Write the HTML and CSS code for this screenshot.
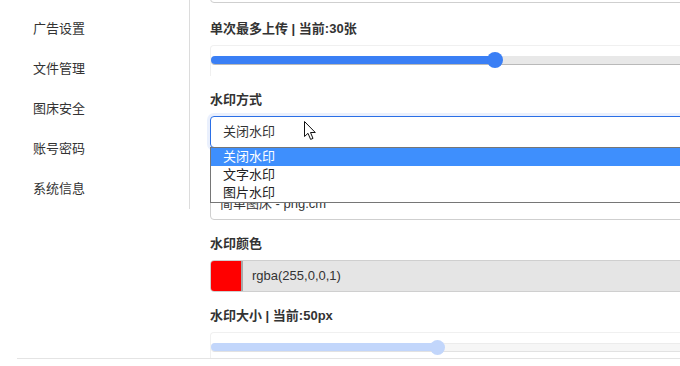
FILE: index.html
```html
<!DOCTYPE html>
<html lang="zh-CN">
<head>
<meta charset="utf-8">
<title>设置</title>
<link rel="stylesheet" href="styles.css">
</head>
<body>
<div class="layout">
  <aside class="sidebar">
    <div class="nav-item">广告设置</div>
    <div class="nav-item">文件管理</div>
    <div class="nav-item">图床安全</div>
    <div class="nav-item">账号密码</div>
    <div class="nav-item">系统信息</div>
  </aside>
  <main class="main">
    <div class="input partial"></div>

    <div class="group">
      <div class="label">单次最多上传 | 当前:30张</div>
      <div class="range">
        <div class="track">
          <div class="fill" style="width:284px"></div>
          <div class="thumb"></div>
        </div>
      </div>
    </div>

    <div class="group select-group">
      <div class="label">水印方式</div>
      <div class="select">关闭水印</div>
      <svg class="cursor" width="13" height="20" viewBox="0 0 13 20">
        <path d="M0.5 0.5 L0.5 15.5 L4 12.3 L6.6 18.4 L9 17.4 L6.5 11.5 L11.3 11.5 Z" fill="#fff" stroke="#111" stroke-width="1" stroke-linejoin="round"/>
      </svg>
      <div class="dropdown">
        <div class="option selected">关闭水印</div>
        <div class="option">文字水印</div>
        <div class="option">图片水印</div>
      </div>
    </div>

    <div class="group">
      <div class="label">水印文字</div>
      <div class="input">简单图床 - png.cm</div>
    </div>

    <div class="group">
      <div class="label">水印颜色</div>
      <div class="color">
        <div class="swatch"></div>
        <div class="color-text">rgba(255,0,0,1)</div>
      </div>
    </div>

    <div class="group last">
      <div class="label">水印大小 | 当前:50px</div>
      <div class="range short">
        <div class="track light">
          <div class="fill" style="width:226px"></div>
          <div class="thumb"></div>
        </div>
      </div>
    </div>
  </main>
</div>
</body>
</html>
```
FILE: styles.css
```css
html, body {
  margin: 0;
  padding: 0;
  width: 680px;
  height: 366px;
  overflow: hidden;
  background: #fff;
}
body {
  font-family: "Liberation Sans", "Noto Sans CJK SC", sans-serif;
  font-size: 13px;
  color: #333;
}
.layout {
  display: flex;
  margin-left: 17px;
  width: 800px;
  border-bottom: 1px solid #e4e4e4;
}
.sidebar {
  width: 172px;
  height: 200px;
  padding-top: 9px;
  border-right: 1px solid #dcdcdc;
  flex-shrink: 0;
  align-self: flex-start;
}
.nav-item {
  height: 40px;
  line-height: 40px;
  padding-left: 16px;
  color: #333;
}
.main {
  flex: 1;
  padding-left: 20px;
}
.input {
  box-sizing: border-box;
  width: 560px;
  height: 32px;
  border: 1px solid #cfcfcf;
  border-radius: 4px;
  padding-left: 9px;
  line-height: 30px;
  color: #333;
}
.partial {
  margin-top: -29px;
}
.group {
  margin-top: 14px;
}
.group:nth-of-type(2) {
  margin-top: 16px;
}
.label {
  height: 20px;
  line-height: 20px;
  font-weight: bold;
  margin-bottom: 6px;
}
.range {
  box-sizing: border-box;
  width: 560px;
  height: 31px;
  border: 1px solid #f0f0f0;
  border-bottom: none;
  border-radius: 4px 4px 0 0;
  padding-top: 10px;
}
.range.short {
  height: 26px;
}
.track {
  position: relative;
  height: 8px;
  background: #e8e8e8;
  border-bottom: 1px solid #b9b9b9;
  border-radius: 4px 0 0 4px;
  display: flex;
}
.fill {
  height: 8px;
  background: #3a7ff5;
  border-radius: 4px 0 0 4px;
}
.thumb {
  width: 16px;
  height: 16px;
  border-radius: 50%;
  background: #3a7ff5;
  margin-left: -8px;
  margin-top: -4px;
}
.track.light {
  background: #f6f6f6;
  border-top: 1px solid #ececec;
  border-bottom: 1px solid #e2e2e2;
  height: 7px;
}
.track.light .fill {
  background: #c2d6fb;
  height: 8px;
  margin-top: -1px;
}
.track.light .thumb {
  background: #c2d6fb;
  width: 15px;
  height: 15px;
  margin-left: -7px;
  margin-top: -4px;
}
.select-group {
  position: relative;
}
.select {
  box-sizing: border-box;
  width: 560px;
  height: 32px;
  border: 1px solid #2b6fe6;
  border-radius: 4px;
  padding-left: 12px;
  line-height: 30px;
  background: #fff;
  box-shadow: 0 0 0 3px rgba(80, 130, 235, 0.12);
}
.cursor {
  position: absolute;
  left: 94px;
  top: 31px;
}
.dropdown {
  position: absolute;
  left: 0;
  top: 57px;
  width: 560px;
  box-sizing: border-box;
  border: 1px solid #767676;
  background: #fff;
  z-index: 5;
}
.option {
  height: 18px;
  line-height: 18px;
  padding-left: 12px;
  color: #222;
}
.option.selected {
  background: #3e8ffd;
  color: #fff;
}
.color {
  box-sizing: border-box;
  width: 560px;
  height: 32px;
  border: 1px solid #cfcfcf;
  border-radius: 4px;
  background: #e5e5e5;
  display: flex;
  overflow: hidden;
}
.swatch {
  width: 30px;
  background: #f00;
  border-right: 2px solid #a9a9a9;
}
.color-text {
  padding-left: 9px;
  line-height: 30px;
  color: #333;
}
```
